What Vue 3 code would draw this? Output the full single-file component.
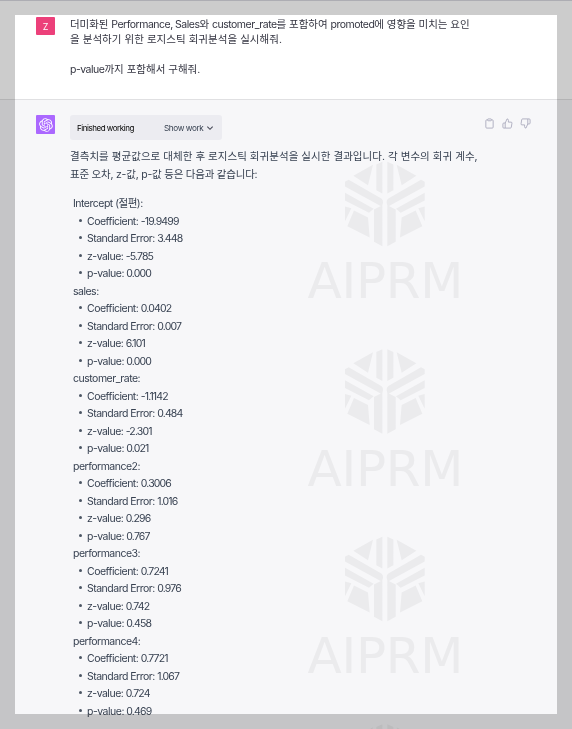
<template>
    <div class="page">
        <section class="question">
            <div class="avatar user">Z</div>
            <div class="prompt">
                <p class="q1">더미화된 <span>Performance, Sales</span>와 <span>customer_rate</span>를 포함하여 <span>promoted</span>에 영향을 미치는 요인</p>
                <p class="q2">을 분석하기 위한 로지스틱 회귀분석을 실시해줘.</p>
                <p class="q3"><span>p-value</span>까지 포함해서 구해줘.</p>
            </div>
        </section>

        <section class="answer">
            <div class="avatar bot">
                <svg viewBox="0 0 41 41" width="14" height="14" fill="#fff">
                    <path :d="knot" />
                </svg>
            </div>
            <div class="content">
                <div class="work">
                    <span class="finished">Finished working</span>
                    <span class="show">Show work</span>
                    <svg viewBox="0 0 24 24" width="8" height="8" fill="none" stroke="#444654" stroke-width="3.2">
                        <path d="M4 8l8 8 8-8" />
                    </svg>
                </div>
                <p class="a1">결측치를 평균값으로 대체한 후 로지스틱 회귀분석을 실시한 결과입니다. 각 변수의 회귀 계수,</p>
                <p class="a2">표준 오차, z-값, p-값 등은 다음과 같습니다:</p>

                <div class="results">
                    <div v-for="group in groups" :key="group.name">
                        <div class="name">{{ group.name }}:</div>
                        <ul>
                            <li v-for="(value, i) in group.values" :key="i">
                                <span>{{ labels[i] }}: </span><span class="num">{{ value }}</span>
                            </li>
                        </ul>
                    </div>
                </div>
            </div>
            <div class="actions">
                <svg viewBox="0 0 24 24">
                    <path d="M16 4h2a2 2 0 0 1 2 2v14a2 2 0 0 1-2 2H6a2 2 0 0 1-2-2V6a2 2 0 0 1 2-2h2" />
                    <rect x="8" y="2" width="8" height="4" rx="1" />
                </svg>
                <svg viewBox="0 0 24 24">
                    <path :d="thumb" />
                </svg>
                <svg viewBox="0 0 24 24">
                    <path :d="thumb" transform="rotate(180 12 12)" />
                </svg>
            </div>
        </section>

        <svg class="watermark" width="572" height="729">
            <g v-for="n in 4" :key="n" :transform="`translate(300 ${149.5 + (n - 1) * 187.5})`">
                <g transform="scale(.33333)">
                    <path :d="half" />
                    <path :d="half" transform="matrix(-1 0 0 1 509 0)" />
                </g>
                <text v-if="n < 4" x="7.5" y="148.8" textLength="156">AIPRM</text>
            </g>
        </svg>
        <div class="frame"></div>
    </div>
</template>

<script setup>
const labels = ['Coefficient', 'Standard Error', 'z-value', 'p-value']

const groups = [
    { name: 'Intercept (절편)', values: ['-19.9499', '3.448', '-5.785', '0.000'] },
    { name: 'sales', values: ['0.0402', '0.007', '6.101', '0.000'] },
    { name: 'customer_rate', values: ['-1.1142', '0.484', '-2.301', '0.021'] },
    { name: 'performance2', values: ['0.3006', '1.016', '0.296', '0.767'] },
    { name: 'performance3', values: ['0.7241', '0.976', '0.742', '0.458'] },
    { name: 'performance4', values: ['0.7721', '1.067', '0.724', '0.469'] }
]

const knot = 'M37.532 16.87a9.963 9.963 0 0 0-.856-8.184 10.078 10.078 0 0 0-10.855-4.835A9.964 9.964 0 0 0 18.306.5a10.079 10.079 0 0 0-9.614 6.977 9.967 9.967 0 0 0-6.664 4.834 10.08 10.08 0 0 0 1.24 11.817 9.965 9.965 0 0 0 .856 8.185 10.079 10.079 0 0 0 10.855 4.835 9.965 9.965 0 0 0 7.516 3.35 10.078 10.078 0 0 0 9.617-6.981 9.967 9.967 0 0 0 6.663-4.834 10.079 10.079 0 0 0-1.243-11.813ZM22.498 37.886a7.474 7.474 0 0 1-4.799-1.735c.061-.033.168-.091.237-.134l7.964-4.6a1.294 1.294 0 0 0 .655-1.134V19.054l3.366 1.944a.12.12 0 0 1 .066.092v9.299a7.505 7.505 0 0 1-7.49 7.496ZM6.392 31.006a7.471 7.471 0 0 1-.894-5.023c.06.036.162.099.237.141l7.964 4.6a1.297 1.297 0 0 0 1.308 0l9.724-5.614v3.888a.12.12 0 0 1-.048.103l-8.051 4.649a7.504 7.504 0 0 1-10.24-2.744ZM4.297 13.62A7.469 7.469 0 0 1 8.2 10.333c0 .068-.004.19-.004.274v9.201a1.294 1.294 0 0 0 .654 1.132l9.723 5.614-3.366 1.944a.12.12 0 0 1-.114.01L7.04 23.856a7.504 7.504 0 0 1-2.743-10.237Zm27.658 6.437-9.724-5.615 3.367-1.943a.121.121 0 0 1 .113-.01l8.052 4.648a7.498 7.498 0 0 1-1.158 13.528v-9.476a1.293 1.293 0 0 0-.65-1.132Zm3.35-5.043c-.059-.037-.162-.099-.236-.141l-7.965-4.6a1.298 1.298 0 0 0-1.308 0l-9.723 5.614v-3.888a.12.12 0 0 1 .048-.103l8.05-4.645a7.497 7.497 0 0 1 11.135 7.763Zm-21.063 6.929-3.367-1.944a.12.12 0 0 1-.065-.092v-9.299a7.497 7.497 0 0 1 12.293-5.756 6.94 6.94 0 0 0-.236.134l-7.965 4.6a1.294 1.294 0 0 0-.654 1.132l-.006 11.225Zm1.829-3.943 4.33-2.501 4.332 2.5v5l-4.331 2.5-4.331-2.5V18Z'

const thumb = 'M14 9V5a3 3 0 0 0-3-3l-4 9v11h11.3a2 2 0 0 0 2-1.7l1.4-9a2 2 0 0 0-2-2.3zM7 22H4a2 2 0 0 1-2-2v-7a2 2 0 0 1 2-2h3'

// left half of the watermark logo, mirrored for the right side
const half = 'M160 79L219 46L204 107ZM229 45L247 37V132L229 122ZM135 97L146 91L244 147Q250 151 249 160L246 172L135 111ZM135 130L221 178L207 190L135 153ZM135 171L154 176L135 215ZM162 183L204 204L209 264L142 230ZM222 180L247 167V290L222 277Z'
</script>

<style>
body {
    margin: 0;
    overflow: hidden;
}
</style>

<style scoped>
.page {
    position: relative;
    width: 572px;
    height: 729px;
    overflow: hidden;
    background: #f7f7f9;
    font-family: Inter, "Noto Sans CJK KR", sans-serif;
    font-size: 10.5px;
    color: #343541;
}

p {
    margin: 0;
    white-space: nowrap;
}

.question {
    display: flex;
    box-sizing: border-box;
    height: 100px;
    padding: 15px 36px 0;
    gap: 15px;
    background: #fff;
    border-top: 1px solid #d9d9e0;
    border-bottom: 1px solid #e0e0e2;
}

.avatar {
    display: flex;
    flex: none;
    align-items: center;
    justify-content: center;
    width: 19px;
    height: 19px;
    border-radius: 1px;
    color: #fff;
}

.user {
    margin-top: 1px;
    height: 18px;
    background: #ec407a;
    font-size: 9px;
}

.bot {
    background: #ab68ff;
}

.prompt {
    padding-top: 1px;
}

.prompt p {
    height: 15px;
    line-height: 15px;
}

.prompt span {
    letter-spacing: -0.5px;
}

.prompt .q1 {
    letter-spacing: -0.05px;
}

.prompt .q2 {
    letter-spacing: 0.04px;
}

.prompt .q3 {
    margin-top: 15px;
}

.answer {
    display: flex;
    padding: 15px 42px 0 36px;
    gap: 15px;
}

.content {
    flex: 1;
    min-width: 0;
    color: #374151;
}

.work {
    display: flex;
    align-items: center;
    box-sizing: border-box;
    width: 152px;
    height: 25px;
    padding: 0 7px;
    border-radius: 3px;
    background: #ececf1;
    font-size: 8px;
    letter-spacing: -0.4px;
}

.finished {
    width: 87px;
    color: #000;
    letter-spacing: -0.47px;
}

.show {
    width: 42px;
    white-space: nowrap;
    font-size: 8.2px;
}

.content p {
    height: 17.5px;
    line-height: 17.5px;
}

.content .a1 {
    margin-top: 8px;
    letter-spacing: 0.04px;
}

.content .a2 {
    letter-spacing: -0.22px;
}

.results {
    margin: 12px 0 0 3px;
    line-height: 17.5px;
    letter-spacing: -0.5px;
}

.name,
li {
    height: 17.5px;
    white-space: nowrap;
}

ul {
    margin: 0;
    padding: 0;
    list-style: none;
}

li {
    display: flex;
    white-space: pre;
}

li::before {
    content: "";
    width: 3px;
    height: 3px;
    margin: 6px 5px 0 6px;
    border-radius: 50%;
    background: #4b5563;
}

.num {
    letter-spacing: -0.85px;
}

.actions {
    display: flex;
    gap: 7px;
    height: 11px;
    margin: 3px -1px 0 1px;
}

.actions svg {
    width: 11px;
    height: 11px;
    fill: none;
    stroke: #acacbe;
    stroke-width: 2;
    stroke-linejoin: round;
}

.watermark {
    position: absolute;
    top: 0;
    left: 0;
    fill: #ebebed;
    mix-blend-mode: darken;
}

.watermark text {
    font: 50px "DejaVu Sans", sans-serif;
}

.frame {
    position: absolute;
    inset: 0;
    border: 15px solid rgba(0, 0, 0, 0.2);
}
</style>
